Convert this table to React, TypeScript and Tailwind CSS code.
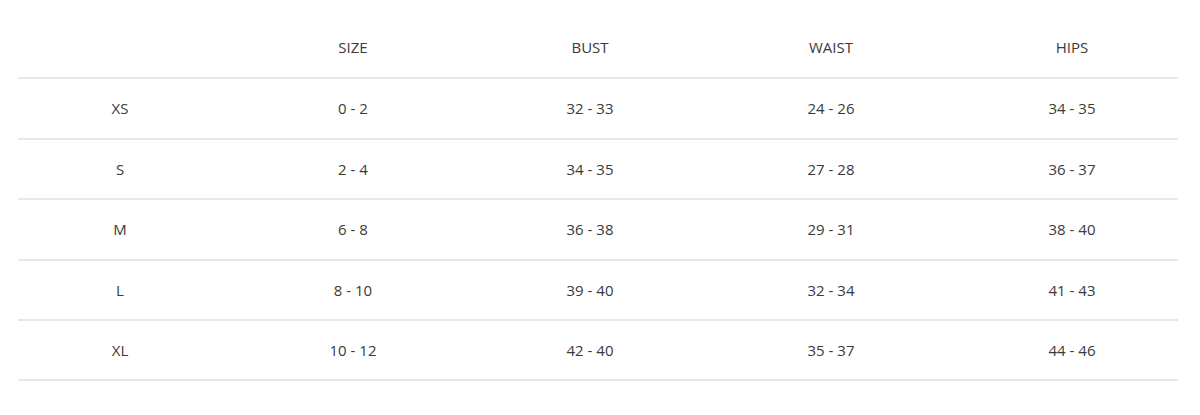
const rows = [
  ["XS", "0 - 2", "32 - 33", "24 - 26", "34 - 35"],
  ["S", "2 - 4", "34 - 35", "27 - 28", "36 - 37"],
  ["M", "6 - 8", "36 - 38", "29 - 31", "38 - 40"],
  ["L", "8 - 10", "39 - 40", "32 - 34", "41 - 43"],
  ["XL", "10 - 12", "42 - 40", "35 - 37", "44 - 46"],
]

const headers = ["", "SIZE", "BUST", "WAIST", "HIPS"]

export default function App() {
  return (
    <div className="bg-white w-[1200px] h-[415px] pl-[18px] pt-[18px] font-['Open_Sans',sans-serif] text-[15px] text-[#3a3a3a]">
      <table className="w-[1160px] table-fixed border-collapse">
        <colgroup>
          <col className="w-[204px]" />
          <col className="w-[262px]" />
          <col className="w-[212px]" />
          <col className="w-[270px]" />
          <col className="w-[212px]" />
        </colgroup>
        <thead>
          <tr className="h-[60.4px] border-b-2 border-[#e8e8e8]">
            {headers.map((h, i) => (
              <th key={i} className="font-normal text-center p-0">
                {h}
              </th>
            ))}
          </tr>
        </thead>
        <tbody>
          {rows.map((row) => (
            <tr key={row[0]} className="h-[60.4px] border-b-2 border-[#e8e8e8]">
              {row.map((cell, i) => (
                <td key={i} className="text-center p-0">
                  {cell}
                </td>
              ))}
            </tr>
          ))}
        </tbody>
      </table>
    </div>
  )
}
